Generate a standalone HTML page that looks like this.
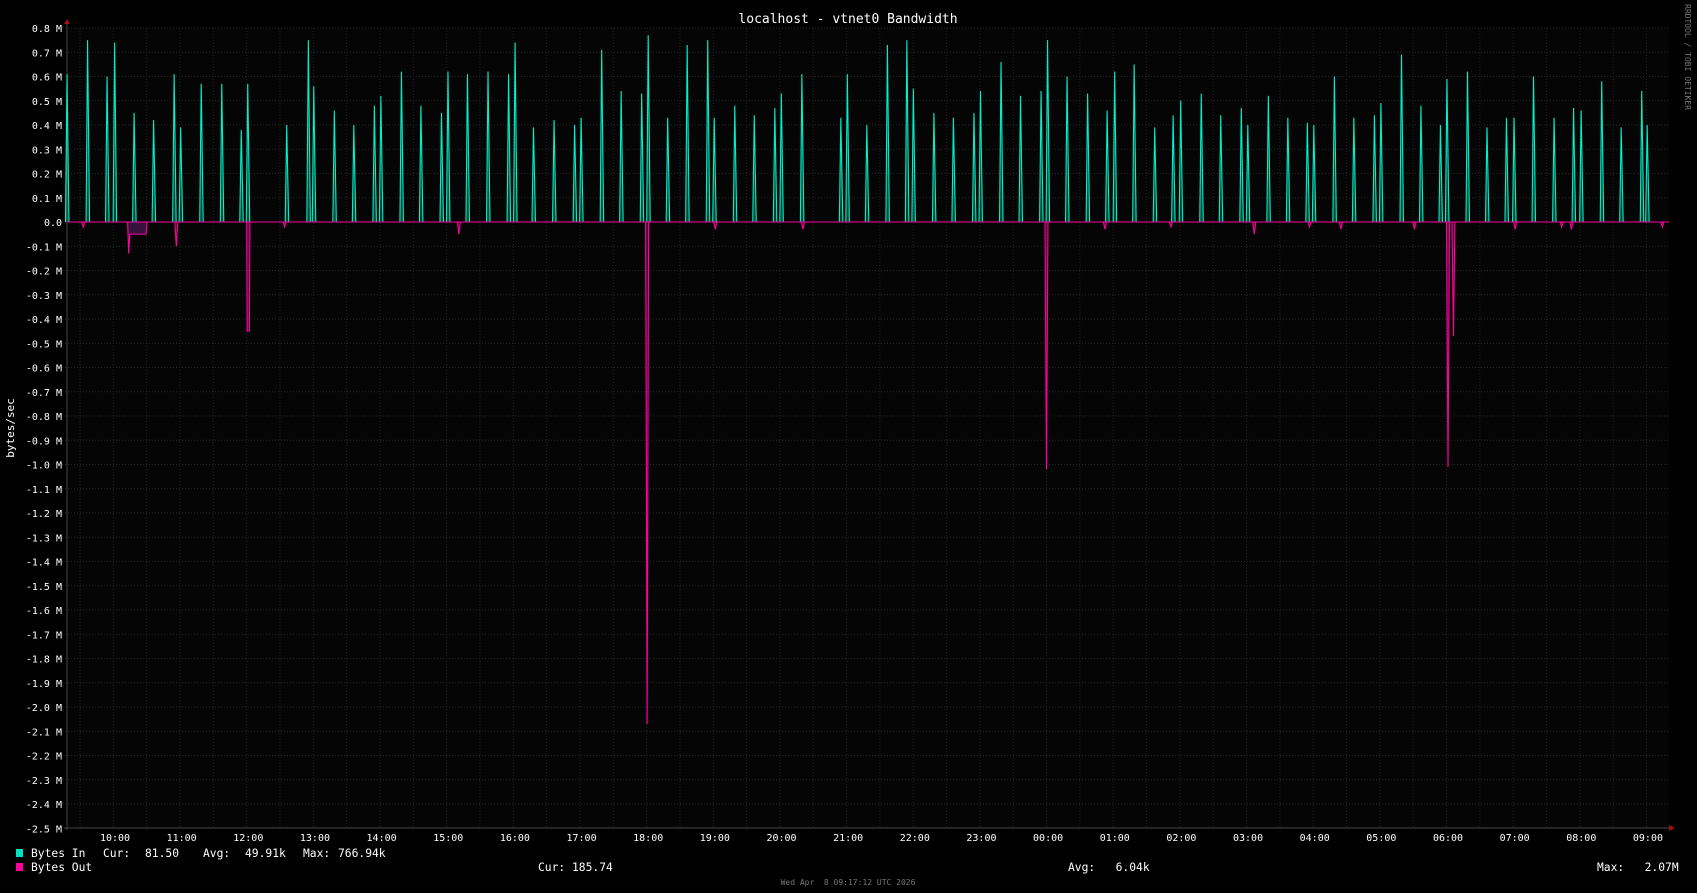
<!DOCTYPE html>
<html><head><meta charset="utf-8"><style>
body{margin:0;background:#000;width:1697px;height:893px;overflow:hidden}
svg{display:block}
text{font-family:"DejaVu Sans Mono","Liberation Mono",monospace;fill:#fff}
</style></head><body>
<svg id="s" width="1697" height="893" xmlns="http://www.w3.org/2000/svg">
<rect width="1697" height="893" fill="#000"/>
<rect x="67" y="28" width="1602" height="800" fill="#050505"/>
<g id="grid"></g>
<g id="data"></g>
<g id="lab" font-size="10"></g>
<text x="848" y="23" font-size="13" text-anchor="middle">localhost - vtnet0 Bandwidth</text>
<text transform="translate(14,428) rotate(-90)" font-size="11" text-anchor="middle">bytes/sec</text>
<text transform="translate(1685,4) rotate(90)" font-size="8" style="fill:#777">RRDTOOL / TOBI OETIKER</text>
<polygon points="64,24 70,24 67,19" fill="#a01010"/>
<polygon points="1669,825 1669,831 1675,828" fill="#a01010"/>
<g font-size="11.3">
<rect x="16" y="849" width="7" height="8" fill="#00e0c0"/>
<rect x="16" y="863" width="7" height="8" fill="#ff00a0"/>
<text x="31" y="857">Bytes In</text>
<text x="103" y="857">Cur:</text>
<text x="145" y="857">81.50</text>
<text x="203" y="857">Avg:</text>
<text x="245" y="857">49.91k</text>
<text x="303" y="857">Max:</text>
<text x="338" y="857">766.94k</text>
<text x="31" y="871">Bytes Out</text>
<text x="538" y="871" xml:space="preserve">Cur: 185.74</text>
<text x="1068" y="871" xml:space="preserve">Avg:   6.04k</text>
<text x="1597" y="871" xml:space="preserve">Max:   2.07M</text>
</g>
<text x="848" y="885" font-size="8" text-anchor="middle" style="fill:#777" xml:space="preserve">Wed Apr  8 09:17:12 UTC 2026</text>
</svg>
<script>
var NS="http://www.w3.org/2000/svg";
function el(p,t,a,txt){var e=document.createElementNS(NS,t);for(var k in a)e.setAttribute(k,a[k]);if(txt!=null)e.textContent=txt;p.appendChild(e);return e;}
var g=document.getElementById('grid'),L=document.getElementById('lab'),D=document.getElementById('data');
var y0=222,u=242.5;
for(var i=8;i>=-25;i--){var y=y0-i*u/10;
 el(g,'line',{x1:62,x2:1669,y1:y,y2:y,stroke:'#262626','stroke-dasharray':'1,2'});
 var v=(i/10).toFixed(1);var s=i==0?'0.0':(v+' M');
 el(L,'text',{x:62,y:y+4,'text-anchor':'end'},s);}
for(var x=80;x<1669;x+=33.33){el(g,'line',{x1:x,x2:x,y1:28,y2:828,stroke:'#222','stroke-dasharray':'1,2'});}
el(g,'line',{x1:67,x2:67,y1:24,y2:830,stroke:'#444'});
el(g,'line',{x1:64,x2:1669,y1:828,y2:828,stroke:'#444'});
var hrs=['10','11','12','13','14','15','16','17','18','19','20','21','22','23','00','01','02','03','04','05','06','07','08','09'];
for(var h=0;h<24;h++)el(L,'text',{x:115+h*66.65,y:841,'text-anchor':'middle'},hrs[h]+':00');
var sc=1.0823;function X(dx){return 67+(dx-62)*sc;}
var P=[[62,.61],[81,.75],[99,.60],[106,.74],[124,.45],[142,.42],[161,.61],[167,.39],[186,.57],[205,.57],[223,.38],[229,.57],[265,.40],[285,.75],[290,.56],[309,.46],[327,.40],[346,.48],[352,.52],[371,.62],[389,.48],[408,.45],[414,.62],[432,.61],[451,.62],[470,.61],[476,.74],[493,.39],[512,.42],[531,.40],[537,.43],[556,.71],[574,.54],[593,.53],[599,.77],[617,.43],[635,.73],[654,.75],[660,.43],[679,.48],[697,.44],[716,.47],[722,.53],[741,.61],[777,.43],[783,.61],[801,.40],[820,.73],[838,.75],[844,.55],[863,.45],[881,.43],[900,.45],[906,.54],[925,.66],[943,.52],[962,.54],[968,.75],[986,.60],[1005,.53],[1023,.46],[1030,.62],[1048,.65],[1067,.39],[1084,.44],[1091,.50],[1110,.53],[1128,.44],[1147,.47],[1153,.40],[1172,.52],[1190,.43],[1208,.41],[1214,.40],[1233,.60],[1251,.43],[1270,.44],[1276,.49],[1295,.69],[1313,.48],[1331,.40],[1337,.59],[1356,.62],[1374,.39],[1392,.43],[1399,.43],[1417,.60],[1436,.43],[1454,.47],[1461,.46],[1480,.58],[1498,.39],[1517,.54],[1522,.40]];
var N=[[77,-.02],[119,-.13],[163,-.10],[229,-.45],[263,-.02],[424,-.05],[598,-2.07],[661,-.03],[742,-.03],[967,-1.02],[1021,-.03],[1082,-.02],[1159,-.05],[1210,-.02],[1239,-.03],[1307,-.03],[1338,-1.01],[1343,-.47],[1400,-.03],[1443,-.02],[1452,-.03],[1536,-.02]];
function spike(dx,v,col,fill,w){var x=X(dx),y=y0-v*u;var d='M'+(x-1.5)+','+y0+' L'+x+','+y+' L'+(x+(w||2))+','+y0;
 el(D,'path',{d:d+'Z',fill:fill,stroke:'none'});el(D,'path',{d:d,fill:'none',stroke:col,'stroke-width':1.1});}
P.forEach(function(p){spike(p[0],p[1],'#00f0c8','rgba(0,200,160,0.3)');});
el(D,'path',{d:'M'+X(118)+','+y0+' L'+X(119)+','+(y0+.13*u)+' L'+X(120)+','+(y0+.05*u)+' L'+X(135)+','+(y0+.05*u)+' L'+X(136)+','+y0+'Z',fill:'rgba(60,20,70,0.9)',stroke:'#ff00a0','stroke-width':1.1});
el(D,'path',{d:'M'+X(228)+','+y0+' L'+X(228.5)+','+(y0+.45*u)+' L'+X(230.5)+','+(y0+.45*u)+' L'+X(231)+','+y0,fill:'rgba(120,0,80,0.6)',stroke:'#ff00a0','stroke-width':1.1});
N.forEach(function(p){if(p[0]==119||p[0]==229)return;spike(p[0],p[1],'#ff00a0','rgba(160,0,110,0.4)',1.5);});
el(D,'line',{x1:67,x2:1669,y1:y0,y2:y0,stroke:'#ff00a0','stroke-width':1});
</script>
</body></html>
